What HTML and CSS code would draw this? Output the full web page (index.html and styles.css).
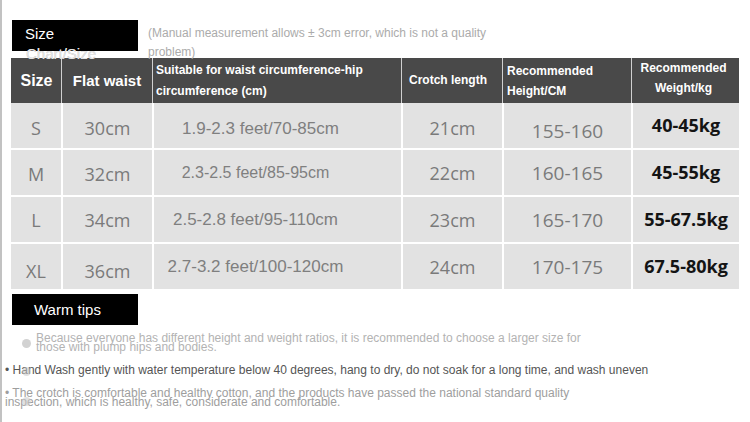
FILE: index.html
```html
<!DOCTYPE html>
<html>
<head>
<meta charset="utf-8">
<link rel="stylesheet" href="styles.css">
</head>
<body>
<div class="page">
  <div class="top">
    <div class="label"><span class="lab-main">Size</span><br><span class="lab-over">Chart/Size</span></div>
    <div class="note">(Manual measurement allows ± 3cm error, which is not a quality problem)</div>
  </div>
  <div class="chart">
    <div class="th h-big first">Size</div>
    <div class="th h-flat">Flat waist</div>
    <div class="th h-left h-suit">Suitable for waist circumference-hip circumference (cm)</div>
    <div class="th h-crotch">Crotch length</div>
    <div class="th h-left h-height">Recommended Height/CM</div>
    <div class="th h-weight">Recommended Weight/kg</div>

    <div class="td first t-size n1">S</div>
    <div class="td t-num n1">30cm</div>
    <div class="td t-range r1">1.9-2.3 feet/70-85cm</div>
    <div class="td t-num n1">21cm</div>
    <div class="td t-height h1">155-160</div>
    <div class="td t-weight">40-45kg</div>

    <div class="td first t-size n2">M</div>
    <div class="td t-num n2">32cm</div>
    <div class="td t-range t-small">2.3-2.5 feet/85-95cm</div>
    <div class="td t-num">22cm</div>
    <div class="td t-height">160-165</div>
    <div class="td t-weight">45-55kg</div>

    <div class="td first t-size">L</div>
    <div class="td t-num">34cm</div>
    <div class="td t-range">2.5-2.8 feet/95-110cm</div>
    <div class="td t-num">23cm</div>
    <div class="td t-height">165-170</div>
    <div class="td t-weight">55-67.5kg</div>

    <div class="td first t-size last n4">XL</div>
    <div class="td t-num last n4">36cm</div>
    <div class="td t-range last">2.7-3.2 feet/100-120cm</div>
    <div class="td t-num last">24cm</div>
    <div class="td t-height last">170-175</div>
    <div class="td t-weight last">67.5-80kg</div>
  </div>
  <div class="tips-head">Warm tips</div>
  <div class="tips">
    <div class="tip tip1">Because everyone has different height and weight ratios, it is recommended to choose a larger size for those with plump hips and bodies.</div>
    <div class="tip tip2">• Hand Wash gently with water temperature below 40 degrees, hang to dry, do not soak for a long time, and wash uneven</div>
    <div class="tip tip3">• The crotch is comfortable and healthy cotton, and the products have passed the national standard quality inspection, which is healthy, safe, considerate and comfortable.</div>
  </div>
</div>
</body>
</html>
```

FILE: styles.css
```css
html, body {
  margin: 0;
  padding: 0;
  background: #fff;
}
body {
  font-family: "Liberation Sans", Arial, sans-serif;
}
.page {
  width: 750px;
  height: 422px;
  box-sizing: border-box;
  border-left: 2px solid #c2c2c2;
  overflow: hidden;
}
.top {
  display: flex;
  height: 58px;
  box-sizing: border-box;
  padding-top: 20px;
}
.label {
  width: 126px;
  height: 31px;
  margin-left: 10px;
  box-sizing: border-box;
  padding: 4px 0 0 13px;
  background: #000;
  color: #fff;
  font-size: 15px;
  line-height: 20px;
  flex: none;
  position: relative;
  z-index: 1;
}
.lab-over {
  color: #e4e4e4;
  text-shadow: 0 0 0.6px #b4b4b4;
  margin-left: 1px;
}
.note {
  width: 345px;
  margin-left: 10px;
  padding-top: 4px;
  font-size: 12px;
  line-height: 19px;
  color: #ababab;
  position: relative;
  z-index: 1;
}
.chart {
  display: grid;
  grid-template-columns: 50px 91px 249px 101px 129px 108px;
  grid-template-rows: 45px 47px 47px 47px 45px;
  width: 728px;
  margin-left: 9px;
}
.th, .td {
  box-sizing: border-box;
  display: flex;
  align-items: center;
  justify-content: center;
  text-align: center;
}
.th {
  background: #494949;
  color: #fff;
  font-weight: bold;
  font-size: 12px;
  line-height: 21px;
  border-left: 1px solid #d0d0d0;
}
.th.first {
  border-left: none;
}
.h-big {
  font-size: 16px;
  padding-left: 1px;
}
.h-flat {
  font-size: 15px;
}
.h-left {
  justify-content: flex-start;
  text-align: left;
}
.h-suit {
  padding-left: 3px;
}
.h-height {
  padding-left: 4px;
  padding-top: 1px;
  line-height: 20px;
}
.h-crotch {
  padding-right: 8px;
}
.h-weight {
  padding-right: 4px;
  padding-bottom: 6px;
  line-height: 20px;
}
.td {
  background: #e2e2e2;
  border-left: 2px solid #fff;
  border-bottom: 2px solid #fff;
  font-family: "Open Sans", "Liberation Sans", sans-serif;
  color: #7a7a7a;
  font-size: 18px;
}
.td.first {
  border-left: none;
}
.td.last {
  border-bottom: none;
}
.n1 {
  padding-top: 5px;
}
.n2 {
  padding-top: 3px;
}
.n4 {
  padding-top: 9px;
}
.t-range {
  font-family: "Liberation Sans", Arial, sans-serif;
  font-size: 17px;
  color: #7f7f7f;
  padding-right: 44px;
}
.t-range.r1 {
  padding-top: 7px;
  padding-right: 34px;
}
.t-range.t-small {
  font-size: 16px;
}
.t-height {
  font-size: 19px;
}
.t-height.h1 {
  padding-top: 10px;
}
.t-weight {
  font-weight: bold;
  color: #141414;
  padding-bottom: 2px;
}
.tips-head {
  width: 126px;
  height: 31px;
  margin: 5px 0 0 10px;
  box-sizing: border-box;
  padding-left: 22px;
  background: #000;
  color: #fff;
  font-size: 15px;
  line-height: 31px;
}
.tips {
  display: flex;
  flex-direction: column;
  gap: 14px;
  margin-top: 9px;
  font-size: 12px;
  line-height: 9px;
}
.tip {
  position: relative;
  width: 595px;
  padding-left: 3px;
}
.tip::before {
  content: "";
  position: absolute;
  left: 20px;
  top: 50%;
  width: 9px;
  height: 9px;
  margin-top: -4px;
  border-radius: 50%;
  background: #d2d2d2;
}
.tip1 {
  padding-left: 34px;
  width: 561px;
  color: #b3b3b3;
}
.tip2 {
  white-space: nowrap;
  color: #555;
}
.tip2::before {
  background: rgba(200, 200, 200, 0.55);
  margin-top: -4px;
}
.tip3 {
  color: #9e9e9e;
}
.tip3::before {
  background: rgba(200, 200, 200, 0.55);
  margin-top: -1px;
}
```
